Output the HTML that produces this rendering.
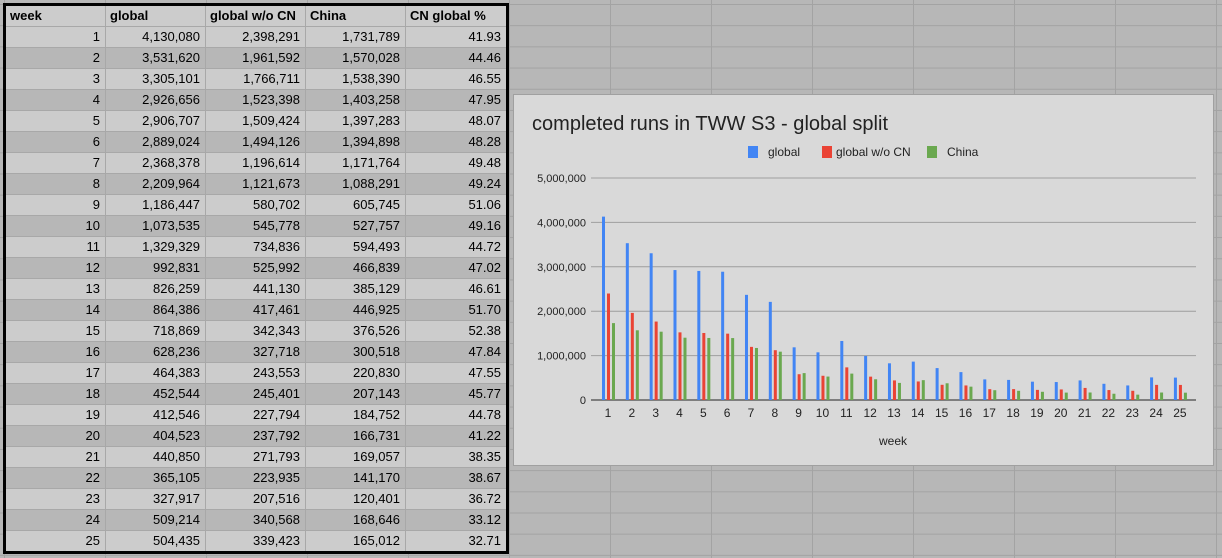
<!DOCTYPE html>
<html><head><style>
body{margin:0;width:1222px;height:558px;overflow:hidden;background:#b7b7b7;font-family:"Liberation Sans",Arial,sans-serif;position:relative}
.grid{position:absolute;left:0;top:0;width:1222px;height:558px;
background-image:linear-gradient(to right,#a3a3a3 1px,transparent 1px),linear-gradient(to bottom,#a3a3a3 1px,transparent 1px);
background-size:101px 21.2px;background-position:4px 4px}
table{position:absolute;left:3px;top:3px;border-collapse:collapse;border:3px solid #000;font-size:13px;color:#000}
td{height:20px;padding:0 5px;border:1px solid #a8a8a8;text-align:right;line-height:20px;white-space:nowrap}
tr:nth-child(odd) td{background:#cccccc}
tr:nth-child(even) td{background:#b7b7b7}
tr.h td{font-weight:bold;text-align:left;padding-left:4px}
td.c0{width:89px}td.c1,td.c2,td.c3{width:90px}td.c4{width:91px}
#chart{position:absolute;left:513px;top:94px;width:701px;height:372px;background:#d9d9d9;border:1px solid #a0a0a0;box-sizing:border-box}
</style></head><body>
<div class="grid"></div>
<table id="t">
<tr class="h"><td class="c0">week</td><td class="c1">global</td><td class="c2">global w/o CN</td><td class="c3">China</td><td class="c4">CN global %</td></tr>
</table>
<div id="chart">
<svg width="701" height="372" style="position:absolute;left:-1px;top:-1px" font-family="Liberation Sans,Arial,sans-serif">
<text x="19" y="36" font-size="20" fill="#222" textLength="356">completed runs in TWW S3 - global split</text>
<rect x="235" y="52" width="10" height="12" fill="#4285f4"/><text x="255" y="62" font-size="12" fill="#222">global</text>
<rect x="309" y="52" width="10" height="12" fill="#ea4335"/><text x="323" y="62" font-size="12" fill="#222">global w/o CN</text>
<rect x="414" y="52" width="10" height="12" fill="#6aa84f"/><text x="434" y="62" font-size="12" fill="#222">China</text>
<g id="g"></g>
<text x="380" y="351" font-size="12" text-anchor="middle" fill="#222">week</text>
</svg>
</div>
<script>
var d=[[4130080,2398291,1731789,"41.93"],[3531620,1961592,1570028,"44.46"],[3305101,1766711,1538390,"46.55"],[2926656,1523398,1403258,"47.95"],[2906707,1509424,1397283,"48.07"],[2889024,1494126,1394898,"48.28"],[2368378,1196614,1171764,"49.48"],[2209964,1121673,1088291,"49.24"],[1186447,580702,605745,"51.06"],[1073535,545778,527757,"49.16"],[1329329,734836,594493,"44.72"],[992831,525992,466839,"47.02"],[826259,441130,385129,"46.61"],[864386,417461,446925,"51.70"],[718869,342343,376526,"52.38"],[628236,327718,300518,"47.84"],[464383,243553,220830,"47.55"],[452544,245401,207143,"45.77"],[412546,227794,184752,"44.78"],[404523,237792,166731,"41.22"],[440850,271793,169057,"38.35"],[365105,223935,141170,"38.67"],[327917,207516,120401,"36.72"],[509214,340568,168646,"33.12"],[504435,339423,165012,"32.71"]];
var f=n=>n.toLocaleString('en-US');
var t=document.getElementById('t'),h='';
d.forEach((r,i)=>{h+='<tr><td class="c0">'+(i+1)+'</td><td>'+f(r[0])+'</td><td>'+f(r[1])+'</td><td>'+f(r[2])+'</td><td>'+r[3]+'</td></tr>'});
t.insertAdjacentHTML('beforeend',h);
var s='',ox=-513,oy=-94;
var labs=['0','1,000,000','2,000,000','3,000,000','4,000,000','5,000,000'];
for(var k=0;k<=5;k++){var y=399-k*44.4+oy+1;s+='<line x1="'+(590+ox+1)+'" x2="'+(1195+ox+1)+'" y1="'+y+'" y2="'+y+'" stroke="'+(k?'#9e9e9e':'#222')+'" stroke-width="1"/>';s+='<text x="'+(585+ox+1)+'" y="'+(y+4)+'" font-size="11" text-anchor="end" fill="#222">'+labs[k]+'</text>'}
var cols=['#4285f4','#ea4335','#6aa84f'];
d.forEach((r,i)=>{var c=607+i*23.83+ox+1;for(var j=0;j<3;j++){var hh=r[j]/5e6*222;s+='<rect x="'+(c-6+j*5)+'" y="'+(399+oy+1-hh)+'" width="3" height="'+hh+'" fill="'+cols[j]+'"/>'}
s+='<text x="'+c+'" y="'+(399+oy+1+17)+'" font-size="12" text-anchor="middle" fill="#222">'+(i+1)+'</text>'});
document.getElementById('g').innerHTML=s;
</script>
</body></html>
